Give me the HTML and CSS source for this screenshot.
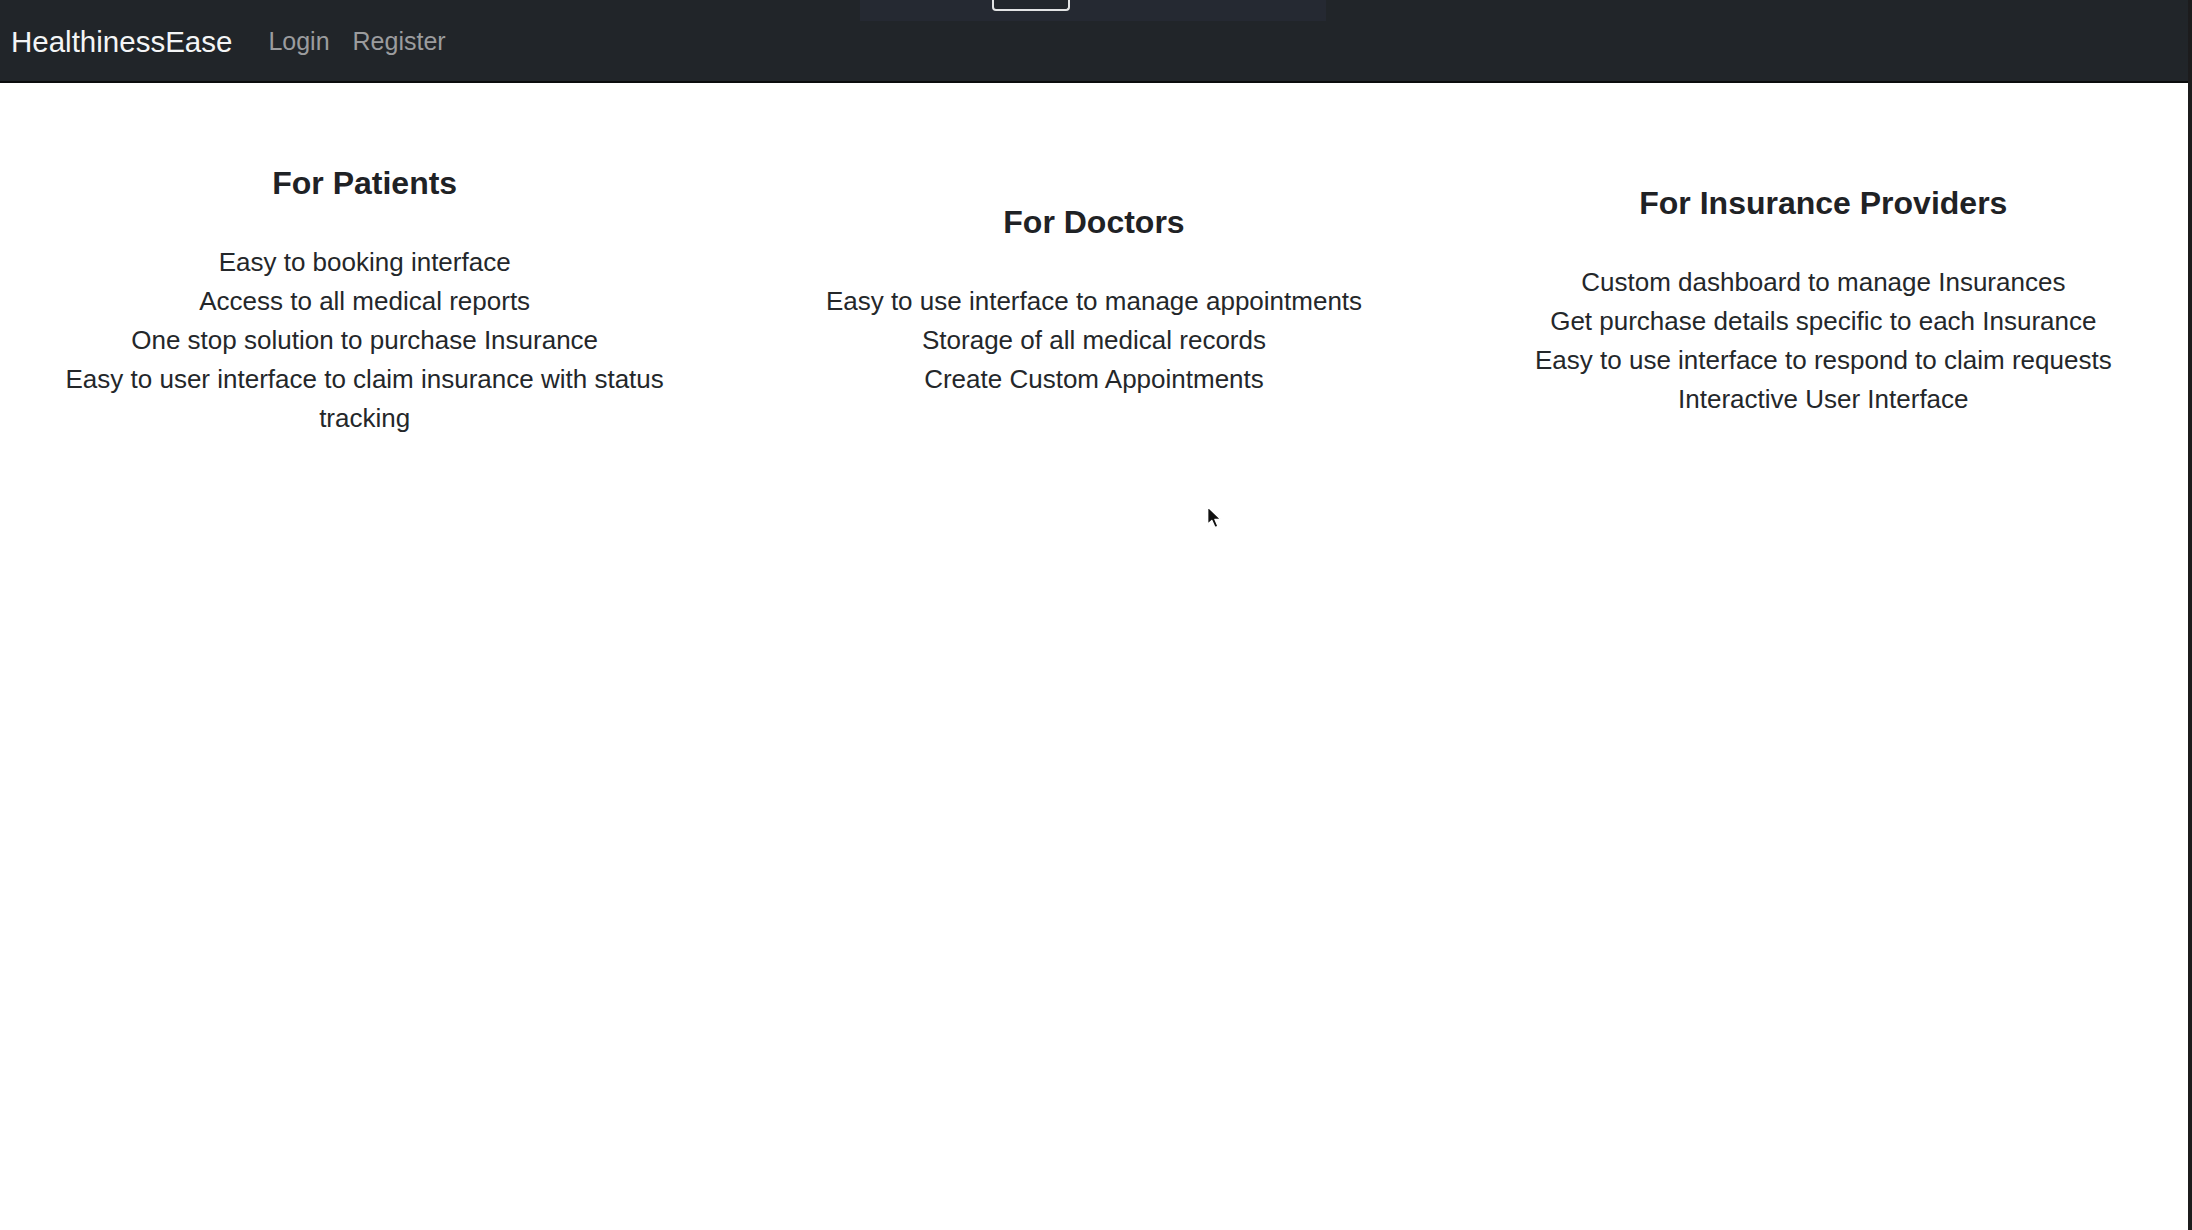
FILE: index.html
```html
<!DOCTYPE html>
<html lang="en">
<head>
<meta charset="utf-8">
<title>HealthinessEase</title>
<link rel="stylesheet" href="styles.css">
</head>
<body>
<div class="page">
  <nav class="navbar">
    <a class="brand" href="#">HealthinessEase</a>
    <ul class="nav">
      <li><a class="nav-link" href="#">Login</a></li>
      <li><a class="nav-link" href="#">Register</a></li>
    </ul>
  </nav>
  <div class="rec-band"><span class="rec-tab"></span></div>
  <main class="features">
    <section class="col">
      <h5 class="col-title">For Patients</h5>
      <ul class="points">
        <li>Easy to booking interface</li>
        <li>Access to all medical reports</li>
        <li>One stop solution to purchase Insurance</li>
        <li>Easy to user interface to claim insurance with status tracking</li>
      </ul>
    </section>
    <section class="col">
      <h5 class="col-title">For Doctors</h5>
      <ul class="points">
        <li>Easy to use interface to manage appointments</li>
        <li>Storage of all medical records</li>
        <li>Create Custom Appointments</li>
      </ul>
    </section>
    <section class="col">
      <h5 class="col-title">For Insurance Providers</h5>
      <ul class="points">
        <li>Custom dashboard to manage Insurances</li>
        <li>Get purchase details specific to each Insurance</li>
        <li>Easy to use interface to respond to claim requests</li>
        <li>Interactive User Interface</li>
      </ul>
    </section>
  </main>
  <svg class="cursor" width="18" height="25" viewBox="0 0 16 22" aria-hidden="true">
    <path d="M1.5 1.5 L1.5 17 L5.2 13.6 L8 20 L10.6 18.8 L7.9 12.6 L12.8 12.4 Z" fill="#111" stroke="#fff" stroke-width="1.2" stroke-linejoin="round"/>
  </svg>
</div>
</body>
</html>
```

FILE: styles.css
```css
* { box-sizing: border-box; }

html, body {
  margin: 0;
  padding: 0;
}

body {
  background: #1c1c1d;
  font-family: "Liberation Sans", Arial, Helvetica, sans-serif;
  color: #212529;
}

.page {
  position: relative;
  margin-right: 4px;
  min-height: 100vh;
  background: #ffffff;
}

/* Navbar */
.navbar {
  display: flex;
  align-items: center;
  height: 83px;
  padding: 2px 11px 0;
  background: #212529;
  border-bottom: 2px solid #0b0c0d;
}

.brand {
  font-size: 29.5px;
  color: #f4f5f6;
  text-decoration: none;
  margin-right: 24px;
  line-height: 1;
}

.nav {
  display: flex;
  list-style: none;
  margin: 0;
  padding: 0;
}

.nav-link {
  display: block;
  padding: 0 12px;
  font-size: 25px;
  line-height: 1;
  color: #9b9c9e;
  text-decoration: none;
}

.nav li + li .nav-link {
  padding-left: 11px;
}

/* Screen-recording overlay at top */
.rec-band {
  position: absolute;
  top: 0;
  left: 860px;
  width: 466px;
  height: 21px;
  background: #252932;
  display: flex;
  justify-content: flex-start;
}

.rec-tab {
  margin-left: 132px;
  width: 78px;
  height: 11px;
  border: 2px solid #e2e3e4;
  border-top: none;
  border-radius: 0 0 4px 4px;
  background: #22262c;
}

/* Feature columns */
.features {
  display: grid;
  grid-template-columns: repeat(3, 1fr);
  align-items: center;
  padding-top: 81px;
}

.col {
  padding: 0 24px;
  text-align: center;
}

.col-title {
  margin: 0 0 40px;
  font-size: 32px;
  font-weight: 700;
  line-height: 39px;
  color: #1f2225;
}

.points {
  list-style: none;
  margin: 0;
  padding: 0;
  font-size: 26px;
  line-height: 39px;
  color: #24272a;
}

.cursor {
  position: absolute;
  left: 1206px;
  top: 505px;
}
```
